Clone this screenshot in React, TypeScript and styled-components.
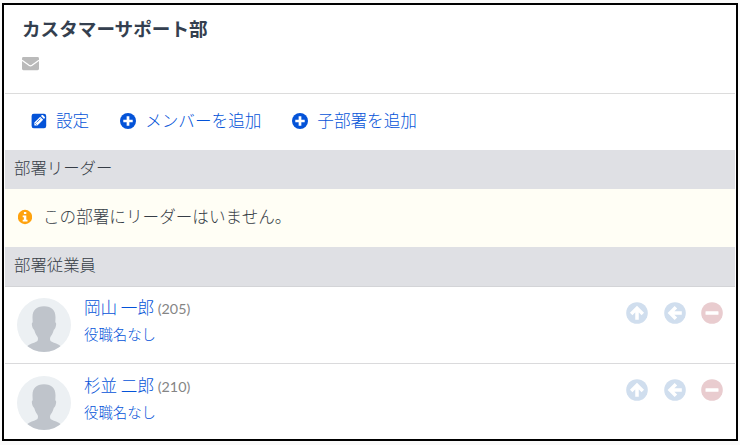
import React from "react";
import styled, { createGlobalStyle } from "styled-components";

const GlobalStyle = createGlobalStyle`
  * { box-sizing: border-box; }
  body {
    margin: 0;
    background: #fafafa;
    color: #363d46;
    font-family: "Noto Sans CJK JP", sans-serif;
    font-weight: 300;
  }
  svg { display: block; flex: none; }
`;

const Frame = styled.main`
  width: 736px;
  height: 438px;
  margin: 3px 2px 4px;
  border: 2px solid #000;
  padding: 0 1px;
  background: #fff;
  overflow: hidden;
`;

const Header = styled.header`
  height: 89px;
  padding: 9px 17px 0;
  border-bottom: 1px solid #dcdcdc;
`;

const Title = styled.h1`
  margin: 0 0 13px;
  font-size: 18.6px;
  line-height: 28px;
  font-weight: 700;
  color: #343f4f;
`;

const Toolbar = styled.nav`
  display: flex;
  height: 56px;
  padding: 0 26px;
  gap: 31px;
`;

const Action = styled.a`
  display: flex;
  align-items: center;
  gap: 9px;
  height: 54px;
  color: #0453d8;
  font-size: 16.6px;
  line-height: 24px;
  white-space: nowrap;
`;

const ActionLabel = styled.span`
  margin-top: -2px;
`;

const SectionTitle = styled.h2<{ $ruled?: boolean }>`
  height: ${(p) => (p.$ruled ? 40 : 39)}px;
  margin: 0;
  padding-left: 9px;
  background: #dfe0e4;
  border-bottom: ${(p) => (p.$ruled ? "1px solid #d3d4d7" : "0")};
  font-size: 16.4px;
  font-weight: 300;
  line-height: 35px;
`;

const Notice = styled.div`
  display: flex;
  align-items: center;
  gap: 11px;
  height: 58px;
  padding: 0 13px 2px;
  background: #fffef5;
  font-size: 16.6px;
  line-height: 24px;
`;

const NoticeText = styled.span`
  margin-top: -2px;
`;

const Member = styled.li`
  display: flex;
  align-items: flex-start;
  height: 77px;
  padding: 11px 12px 0;
  border-bottom: 1px solid #dadadc;
  &:last-child { border-bottom: 0; padding-top: 12px; }
`;

const MemberList = styled.ul`
  list-style: none;
  margin: 0;
  padding: 0;
`;

const Details = styled.div`
  flex: 1;
  margin-left: 13px;
  margin-top: -5px;
  color: #0453d8;
`;

const Name = styled.div`
  font-size: 16.6px;
  line-height: 28px;
  white-space: nowrap;
`;

const Id = styled.span`
  font-family: Lato, sans-serif;
  font-weight: 400;
  font-size: 14.3px;
  color: #858585;
`;

const Role = styled.div`
  font-size: 14.4px;
  line-height: 22px;
`;

const Controls = styled.div`
  display: flex;
  gap: 15.5px;
  padding-top: 4px;
  ${Member}:last-child & { padding-top: 3px; }
`;

const EnvelopeIcon = () => (
  <svg width="17" height="17" viewBox="0 0 17 17">
    <rect y="2" width="17" height="13.200" rx="1.400" fill="#bababa" />
    <path d="M0 5.300 7 10.300q1.500 1 3 0L17 5.300" fill="none" stroke="#fff" strokeWidth="1.300" />
  </svg>
);

const EditIcon = () => (
  <svg width="16" height="16" viewBox="0 0 16 16">
    <rect x="0.600" y="0.800" width="14.600" height="14.400" rx="2.200" fill="currentColor" />
    <path d="M3.400 12.500v-3L9.200 3.700l3 3-5.800 5.800z" fill="#fff" />
    <path d="M10 2.900l.8-.8q.5-.4 1 0l2 2q.4.500 0 1l-.8.8z" fill="#fff" />
    <path d="M5.600 9.500 9.400 5.700M4.300 10.300l1.300 1.300" stroke="currentColor" strokeWidth=".8" />
  </svg>
);

const PlusIcon = () => (
  <svg width="16" height="16" viewBox="0 0 16 16">
    <circle cx="8" cy="8" r="8" fill="currentColor" />
    <path d="M8 3.300v9.400M3.300 8h9.400" stroke="#fff" strokeWidth="2.700" />
  </svg>
);

const InfoIcon = () => (
  <svg width="14" height="16" viewBox="0 0 14 16">
    <circle cx="7" cy="8" r="7.200" fill="#ffa20d" />
    <path d="M5.900 3h2.400v2H5.900zM4.700 6.400h3.600v4.300h1.200v1.800H4.700v-1.800h1.200V8.200H4.700z" fill="#fff" />
  </svg>
);

const ArrowIcon = ({ angle = 0 }: { angle?: number }) => (
  <svg width="22" height="22" viewBox="0 0 22 22">
    <circle cx="11" cy="11" r="10.800" fill="#d0deee" />
    <path
      transform={`rotate(${angle} 11 11)`}
      d="M11 17.800V6.500M5.200 11.900 11 6.100l5.800 5.800"
      fill="none"
      stroke="#fff"
      strokeWidth="3.500"
    />
  </svg>
);

const MinusIcon = () => (
  <svg width="22" height="22" viewBox="0 0 22 22">
    <circle cx="11" cy="11" r="10.800" fill="#e9cccf" />
    <rect x="4.500" y="9.200" width="13" height="3.600" rx=".6" fill="#fff" />
  </svg>
);

const Avatar = () => (
  <svg width="54" height="54" viewBox="0 0 54 54">
    <defs>
      <clipPath id="face"><circle cx="27" cy="27" r="27" /></clipPath>
    </defs>
    <g clipPath="url(#face)">
      <rect width="54" height="54" fill="#ecf0f3" />
      <path
        fill="#bfc4cb"
        d="M27 8.300c-8 0-11.700 4.300-11.500 11.500l.2 4.700c-1.500 0-.8 4 .3 6 .5 1 1.100 1.100 1.300 1.800 1 3.800 2.700 5.600 3.400 6.900.5 1.200.3 3.300-.5 4.100C17.500 45 12 46 9.500 49V56h35v-7c-2.500-3-8-4-10.700-5.700-.8-.8-1-2.900-.5-4.100.7-1.300 2.400-3.100 3.400-6.900.2-.7.8-.8 1.300-1.800 1.100-2 1.800-6 .3-6l.2-4.700C38.700 12.600 35 8.300 27 8.300z"
      />
    </g>
  </svg>
);

const members = [
  { name: "岡山 一郎", id: 205 },
  { name: "杉並 二郎", id: 210 },
];

export default function App() {
  return (
    <>
      <GlobalStyle />
      <Frame>
        <Header>
          <Title>カスタマーサポート部</Title>
          <EnvelopeIcon />
        </Header>
        <Toolbar>
          <Action><EditIcon /><ActionLabel>設定</ActionLabel></Action>
          <Action><PlusIcon /><ActionLabel>メンバーを追加</ActionLabel></Action>
          <Action><PlusIcon /><ActionLabel>子部署を追加</ActionLabel></Action>
        </Toolbar>
        <SectionTitle>部署リーダー</SectionTitle>
        <Notice><InfoIcon /><NoticeText>この部署にリーダーはいません。</NoticeText></Notice>
        <SectionTitle $ruled>部署従業員</SectionTitle>
        <MemberList>
          {members.map((m) => (
            <Member key={m.id}>
              <Avatar />
              <Details>
                <Name>{m.name} <Id>({m.id})</Id></Name>
                <Role>役職名なし</Role>
              </Details>
              <Controls>
                <ArrowIcon />
                <ArrowIcon angle={-90} />
                <MinusIcon />
              </Controls>
            </Member>
          ))}
        </MemberList>
      </Frame>
    </>
  );
}
